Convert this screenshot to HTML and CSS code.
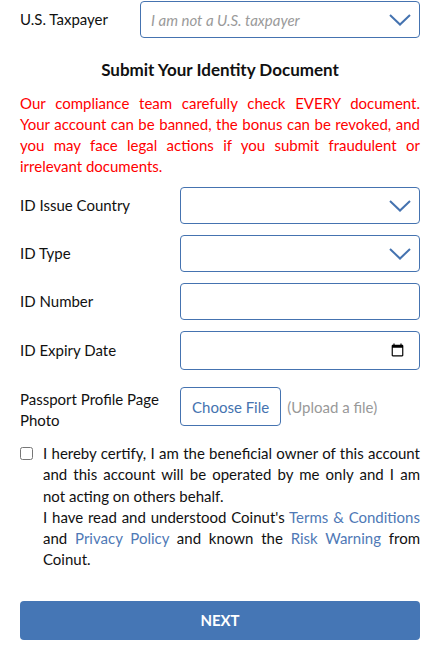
FILE: index.html
```html
<!DOCTYPE html>
<html lang="en">
<head>
    <meta charset="UTF-8">
    <meta name="viewport" content="width=device-width, initial-scale=1.0">
    <title>Identity Document</title>
    <link rel="stylesheet" href="styles.css">
</head>
<body>
    <form class="kyc-form">
        <div class="row row-wide">
            <label class="row-label" for="taxpayer">U.S. Taxpayer</label>
            <div class="select-wrap">
                <select id="taxpayer" class="field select-field placeholder">
                    <option>I am not a U.S. taxpayer</option>
                </select>
                <svg class="chevron" width="22" height="12" viewBox="0 0 22 12"><path d="M1 1 L11 10.5 L21 1" fill="none" stroke="#4573b0" stroke-width="2"/></svg>
            </div>
        </div>

        <h2 class="section-title">Submit Your Identity Document</h2>
        <p class="warning">
            <span class="warning-line">Our compliance team carefully check EVERY document.</span>
            <span class="warning-line">Your account can be banned, the bonus can be revoked, and</span>
            <span class="warning-line">you may face legal actions if you submit fraudulent or</span>
            <span>irrelevant documents.</span>
        </p>

        <div class="row">
            <label class="row-label" for="country">ID Issue Country</label>
            <div class="select-wrap">
                <select id="country" class="field select-field"><option></option></select>
                <svg class="chevron" width="22" height="12" viewBox="0 0 22 12"><path d="M1 1 L11 10.5 L21 1" fill="none" stroke="#4573b0" stroke-width="2"/></svg>
            </div>
        </div>

        <div class="row">
            <label class="row-label" for="idtype">ID Type</label>
            <div class="select-wrap">
                <select id="idtype" class="field select-field"><option></option></select>
                <svg class="chevron" width="22" height="12" viewBox="0 0 22 12"><path d="M1 1 L11 10.5 L21 1" fill="none" stroke="#4573b0" stroke-width="2"/></svg>
            </div>
        </div>

        <div class="row">
            <label class="row-label" for="idnumber">ID Number</label>
            <input id="idnumber" class="field" type="text">
        </div>

        <div class="row">
            <label class="row-label" for="expiry">ID Expiry Date</label>
            <input id="expiry" class="field date-field" type="date">
        </div>

        <div class="row row-file">
            <span class="row-label">Passport Profile Page Photo</span>
            <div class="file-wrap">
                <label class="file-btn" for="photo">Choose File</label>
                <input id="photo" class="file-input" type="file">
                <span class="file-hint">(Upload a file)</span>
            </div>
        </div>

        <div class="certify">
            <input id="certify" class="certify-box" type="checkbox">
            <label for="certify" class="certify-text">
                I hereby certify, I am the beneficial owner of this account and this account will be operated by me only and I am not acting on others behalf.<br>
                I have read and understood Coinut's <a href="#">Terms &amp; Conditions</a> and <a href="#">Privacy Policy</a> and known the <a href="#">Risk Warning</a> from Coinut.
            </label>
        </div>

        <button type="button" class="next-btn">NEXT</button>
    </form>
</body>
</html>
```

FILE: styles.css
```css
body {
    margin: 0;
    padding: 0;
    background-color: #fff;
    font-family: Lato, "Open Sans", sans-serif;
    color: #111;
}

/* Form layout */
.kyc-form {
    padding: 1px 22px 20px 20px;
}

.row {
    display: grid;
    grid-template-columns: 160px 1fr;
    align-items: center;
    margin-bottom: 11px;
}

.row-wide {
    grid-template-columns: 120px 1fr;
}

.row-label {
    font-size: 15px;
    line-height: 21px;
}

/* Inputs */
.field {
    box-sizing: border-box;
    width: 100%;
    height: 37px;
    margin: 0;
    padding: 0 10px;
    border: 1px solid #4573b0;
    border-radius: 4px;
    background-color: #fff;
    font-family: inherit;
    font-size: 15px;
    color: #111;
    outline: none;
}

.select-wrap {
    position: relative;
}

.select-field {
    appearance: none;
    -webkit-appearance: none;
}

.placeholder {
    font-style: italic;
    color: #9a9a9a;
}

.chevron {
    position: absolute;
    right: 9px;
    top: 13px;
    pointer-events: none;
}

.date-field {
    height: 39px;
    color: transparent;
}

.date-field::-webkit-calendar-picker-indicator {
    opacity: 1;
    margin-right: 2px;
}

/* Heading and warning */
.section-title {
    margin: 21px 0 13px;
    font-size: 17px;
    line-height: 21px;
    font-weight: 700;
    text-align: center;
}

.warning {
    margin: 0 0 10px;
    font-size: 15px;
    line-height: 21px;
    color: #ff0000;
}

.warning span {
    display: block;
    white-space: nowrap;
}

.warning .warning-line {
    text-align: justify;
    text-align-last: justify;
}

/* File upload */
.row-file {
    margin-top: 17px;
    align-items: start;
}

.row-file .row-label {
    padding-top: 2px;
}

.file-wrap {
    display: flex;
    align-items: center;
    gap: 6px;
}

.file-btn {
    box-sizing: border-box;
    height: 39px;
    padding: 0 11px;
    display: flex;
    align-items: center;
    border: 1px solid #4573b0;
    border-radius: 4px;
    font-size: 15px;
    color: #4573b0;
    cursor: pointer;
}

.file-input {
    display: none;
}

.file-hint {
    font-size: 15px;
    color: #999;
}

/* Certify block */
.certify {
    display: flex;
    gap: 10px;
    margin-top: 12px;
}

.certify-box {
    flex: none;
    width: 13px;
    height: 13px;
    margin: 4px 0 0;
}

.certify-text {
    font-size: 15px;
    line-height: 21.3px;
    text-align: justify;
}

.certify-text a {
    color: #4f79b6;
    text-decoration: none;
}

/* Submit button */
.next-btn {
    display: block;
    width: 100%;
    height: 39px;
    margin-top: 30px;
    border: none;
    border-radius: 4px;
    background-color: #4576b5;
    font-family: inherit;
    font-size: 15px;
    font-weight: 700;
    color: #fff;
    cursor: pointer;
}
```
